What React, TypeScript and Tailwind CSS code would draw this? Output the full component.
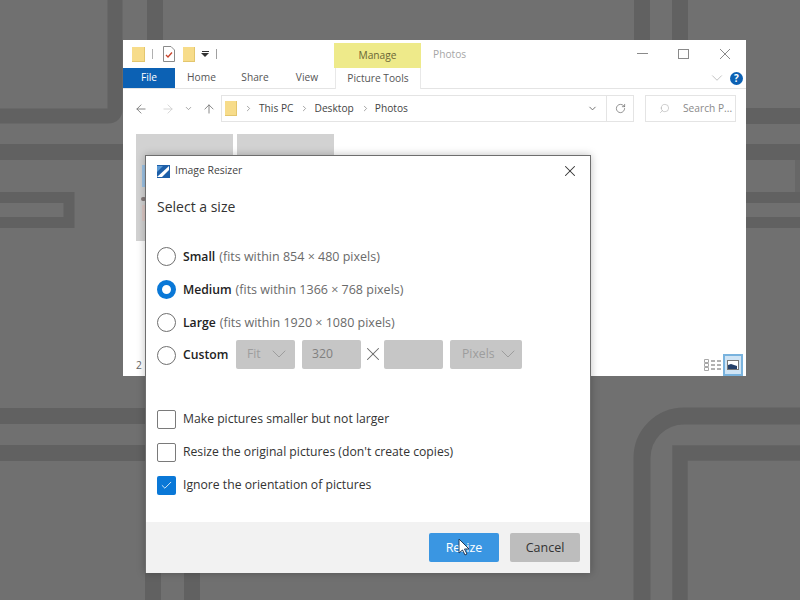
import React from 'react';
import { ArrowLeft, ArrowRight, ArrowUp, ChevronDown, ChevronRight, X, RotateCw, Search, Check } from 'lucide-react';

const FONT = 'font-["Open_Sans","Noto_Sans",sans-serif]';

const Wallpaper = () => (
  <svg className="absolute inset-0" width="800" height="600" viewBox="0 0 800 600" fill="none" stroke="#616161">
    <path d="M0 116H108Q115 116 115 109V0" strokeWidth="15" />
    <path d="M155 0V40" strokeWidth="16" />
    <path d="M0 152H123" strokeWidth="16" />
    <path d="M0 197.500H69V222.500H0" strokeWidth="11" />
    <path d="M642 0V40M680 0V40" strokeWidth="16" />
    <path d="M746 116H800M746 152H800" strokeWidth="16" />
    <path d="M746 197.500H800M746 222.500H800" strokeWidth="11" />
    <path d="M797.500 160V192" strokeWidth="5" stroke="#676767" />
    <path d="M0 416H146M0 453H146" strokeWidth="16" />
    <path d="M153 573V600M192 573V600" strokeWidth="16" />
    <path d="M800 416H684A42 42 0 0 0 642 458V600" strokeWidth="17" />
    <path d="M800 453H680V600" strokeWidth="15.500" />
  </svg>
);

const FolderIcon = ({ className }: { className: string }) => (
  <span className={`block bg-[#f7dc8a] border-b border-r border-[#e3c66e] ${className}`} />
);

const ExplorerWindow = () => (
  <div className={`absolute left-[123px] top-[40px] w-[623px] h-[336px] bg-white flex flex-col ${FONT}`}>
    {/* title row */}
    <div className="h-[28px] flex items-center relative">
      <FolderIcon className="ml-[9px] w-[13px] h-[15px]" />
      <span className="ml-[7px] w-px h-[10px] bg-[#b0b0b0]" />
      <svg className="ml-[10px]" width="12" height="16" viewBox="0 0 12 16" fill="none">
        <path d="M0.500 0.500H8L11.500 4V15.500H0.500Z" fill="#fff" stroke="#8a8a8a" />
        <path d="M3 9L5 11L9 6.500" stroke="#c8442c" strokeWidth="1.300" />
      </svg>
      <FolderIcon className="ml-[8px] w-[12px] h-[15px]" />
      <span className="ml-[6px] flex flex-col items-center gap-[1px]">
        <span className="w-[7px] h-px bg-[#333]" />
        <span className="w-0 h-0 border-x-[4px] border-x-transparent border-t-[4px] border-t-[#333]" />
      </span>
      <span className="ml-[7px] w-px h-[10px] bg-[#a0a0a0]" />
      <div className="absolute left-[211px] top-[3px] w-[87px] h-[25px] pt-[1px] bg-[#eeea8a] flex items-center justify-center text-[10.200px] text-[#6b6636]">
        Manage
      </div>
      <span className="absolute left-[310px] top-[7px] text-[10.200px] text-[#a6a6a6]">Photos</span>
      <span className="absolute left-[514px] top-[13px] w-[11px] h-px bg-[#8a8a8a]" />
      <span className="absolute left-[555px] top-[9px] w-[11px] h-[10px] border border-[#8a8a8a]" />
      <svg className="absolute left-[597px] top-[9px]" width="10" height="10" viewBox="0 0 10 10" stroke="#8a8a8a">
        <path d="M0 0L10 10M10 0L0 10" />
      </svg>
    </div>
    {/* ribbon tabs */}
    <div className="h-[21px] flex items-stretch relative border-b border-[#e4e4e4] text-[10.200px] text-[#555]">
      <div className="w-[52px] bg-[#0c61b4] text-white flex items-center justify-center">File</div>
      <div className="w-[53px] flex items-center justify-center">Home</div>
      <div className="w-[54px] flex items-center justify-center">Share</div>
      <div className="w-[50px] flex items-center justify-center">View</div>
      <div className="ml-[3px] w-[86px] -mb-px bg-white border-x border-[#e8e8e8] flex items-center justify-center">Picture Tools</div>
      <ChevronDown size={18} strokeWidth={0.800} className="absolute left-[585px] top-[1px] text-[#9a9a9a]" />
      <span className="absolute left-[607px] top-[4px] w-[13px] h-[13px] rounded-full bg-[#0c61b4] text-white text-[10px] font-bold leading-[13px] text-center">?</span>
    </div>
    {/* address bar */}
    <div className="h-[39px] flex items-center">
      <ArrowLeft size={14} strokeWidth={1.500} className="ml-[11px] text-[#777]" />
      <ArrowRight size={14} strokeWidth={1.500} className="ml-[13px] text-[#d0d0d0]" />
      <ChevronDown size={9} strokeWidth={2} className="ml-[9px] text-[#888]" />
      <ArrowUp size={14} strokeWidth={1.500} className="ml-[9px] text-[#777]" />
      <div className="ml-[5px] w-[413px] h-[27px] border border-[#e4e4e4] flex items-center text-[10.200px] text-[#444]">
        <FolderIcon className="ml-[3px] w-[12px] h-[15px]" />
        <ChevronRight size={9} strokeWidth={2} className="ml-[7px] text-[#888]" />
        <span className="ml-[6px]">This PC</span>
        <ChevronRight size={9} strokeWidth={2} className="ml-[7px] text-[#888]" />
        <span className="ml-[5px]">Desktop</span>
        <ChevronRight size={9} strokeWidth={2} className="ml-[7px] text-[#888]" />
        <span className="ml-[5px]">Photos</span>
        <ChevronDown size={11} strokeWidth={2} className="ml-auto mr-[8px] text-[#666]" />
        <div className="w-[27px] h-full border-l border-[#e4e4e4] flex items-center justify-center">
          <RotateCw size={11} strokeWidth={1.500} className="text-[#666]" />
        </div>
      </div>
      <div className="ml-[11px] w-[91px] h-[27px] border border-[#e4e4e4] flex items-center text-[10.200px] text-[#8a8a8a]">
        <Search size={11} strokeWidth={1} className="ml-[13px] -scale-x-100 text-[#999]" />
        <span className="ml-[13px]">Search P...</span>
      </div>
    </div>
    {/* thumbnails */}
    <div className="flex gap-[4px] ml-[13px] mt-[6px]">
      <div className="w-[97px] h-[107px] bg-[#d2d2d2] relative">
        <span className="absolute left-[6px] top-[31px] w-[8px] h-[22px] bg-[#9cc3e6]" />
        <span className="absolute left-[5px] top-[63px] w-[5px] h-[4px] rounded-full bg-[#857a7a]" />
        <span className="absolute left-[6px] top-[71px] w-[8px] h-[16px] bg-[#dcc9c5]" />
      </div>
      <div className="w-[97px] h-[21px] bg-[#d2d2d2]" />
    </div>
    {/* status bar */}
    <div className="absolute left-[13px] top-[318px] text-[10.200px] text-[#666]">2</div>
    <div className="absolute right-[3px] bottom-0 flex items-center gap-[2px]">
      <svg width="18" height="14" viewBox="0 0 18 14" fill="none" stroke="#a8a8a8">
        <path d="M1.500 1.500h4v3h-4zM1.500 5.500h4v3h-4zM1.500 9.500h4v3h-4z" />
        <path d="M8 3h4M14 3h4M8 7h4M14 7h4M8 11h4M14 11h4" stroke="#666" />
      </svg>
      <span className="w-[20px] h-[22px] bg-[#cfe4f5] border-2 border-[#79b3de] flex items-center justify-center">
        <svg width="12" height="10" viewBox="0 0 12 10">
          <rect x="0.500" y="0.500" width="11" height="9" fill="#fff" stroke="#777" />
          <path d="M1 5l3-1 6 2v3H1z" fill="#24406a" />
        </svg>
      </span>
    </div>
  </div>
);

const Radio = ({ checked }: { checked?: boolean }) =>
  checked ? (
    <span className="w-[19px] h-[19px] rounded-full border-[5px] border-[#0a78d7] bg-white" />
  ) : (
    <span className="w-[19px] h-[19px] rounded-full border border-[#6f6f6f] bg-white" />
  );

const SizeRow = ({ name, detail, checked }: { name: string; detail: string; checked?: boolean }) => (
  <div className="h-[33px] flex items-center">
    <Radio checked={checked} />
    <span className="ml-[7px] pt-[2px] text-[12.200px] font-semibold text-[#222]">{name}</span>
    <span className="ml-[4px] pt-[2px] text-[12.500px] text-[#6a6a6a]">{detail}</span>
  </div>
);

const Option = ({ label, checked }: { label: string; checked?: boolean }) => (
  <div className="h-[33px] flex items-center text-[12.200px] text-[#333]">
    {checked ? (
      <span className="w-[19px] h-[19px] rounded-[2px] bg-[#0a78d7] flex items-center justify-center">
        <Check size={13} strokeWidth={1.500} className="text-white" />
      </span>
    ) : (
      <span className="w-[19px] h-[19px] rounded-[2px] border border-[#7a7a7a] bg-white" />
    )}
    <span className="ml-[7px]">{label}</span>
  </div>
);

const DisabledBox = ({ className, children }: { className: string; children?: React.ReactNode }) => (
  <div className={`h-[29px] rounded-[2px] bg-[#c6c6c6] flex items-center text-[12.200px] text-[#9d9d9d] ${className}`}>{children}</div>
);

const ResizerDialog = () => (
  <div className={`absolute left-[145px] top-[155px] w-[446px] h-[418px] bg-white border-t border-x border-[#6e6e6e] shadow-[0_0_8px_rgba(0,0,0,0.25)] flex flex-col ${FONT}`}>
    <div className="h-[30px] flex items-center">
      <svg className="ml-[11px]" width="13" height="13" viewBox="0 0 13 13">
        <rect width="13" height="13" fill="#1d5fa8" />
        <path d="M0 12L12 1V5L5 12Z" fill="#fff" />
        <path d="M0 7L6 1H0Z" fill="#5b9ad6" />
      </svg>
      <span className="ml-[5px] text-[10.400px] text-[#444]">Image Resizer</span>
      <X size={18} strokeWidth={1.400} className="ml-auto mr-[11px] text-[#333]" />
    </div>
    <div className="mt-[11px] ml-[11px] text-[14px] leading-[20px] text-[#333]">Select a size</div>
    <div className="mt-[23px] ml-[11px]">
      <SizeRow name="Small" detail="(fits within 854 × 480 pixels)" />
      <SizeRow name="Medium" detail="(fits within 1366 × 768 pixels)" checked />
      <SizeRow name="Large" detail="(fits within 1920 × 1080 pixels)" />
      <div className="h-[32px] flex items-center">
        <Radio />
        <span className="ml-[7px] w-[45px] text-[12.200px] font-semibold text-[#222]">Custom</span>
        <div className="ml-[8px] mb-[2px] flex items-center">
          <DisabledBox className="w-[59px] pl-[11px] pr-[4px] justify-between">
            Fit
            <ChevronDown size={24} strokeWidth={1} />
          </DisabledBox>
          <DisabledBox className="ml-[7px] w-[59px] pl-[10px] text-[#808080]">320</DisabledBox>
          <X size={22} strokeWidth={1.100} className="mx-[0.500px] text-[#666]" />
          <DisabledBox className="w-[59px]" />
          <DisabledBox className="ml-[7px] w-[72px] pl-[12px] pr-[2px] justify-between">
            Pixels
            <ChevronDown size={24} strokeWidth={1} />
          </DisabledBox>
        </div>
      </div>
    </div>
    <div className="mt-[32px] ml-[11px]">
      <Option label="Make pictures smaller but not larger" />
      <Option label="Resize the original pictures (don't create copies)" />
      <Option label="Ignore the orientation of pictures" checked />
    </div>
    <div className="mt-auto h-[51px] bg-[#f2f2f2] flex items-center justify-end gap-[11px] pr-[10px] relative text-[12.500px]">
      <button className="w-[70px] h-[29px] pt-[2px] rounded-[2px] bg-[#3a96e2] text-white">Resize</button>
      <button className="w-[70px] h-[29px] pt-[2px] rounded-[2px] bg-[#bdbdbd] text-[#333]">Cancel</button>
      <svg className="absolute left-[312px] top-[16px]" width="13" height="18" viewBox="0 0 13 18">
        <path d="M1 1V15L4.500 12L7 17L9 16L6.500 11H11Z" fill="#fff" stroke="#1f3a5a" strokeWidth="1" />
      </svg>
    </div>
  </div>
);

export default function App() {
  return (
    <div className="relative w-[800px] h-[600px] overflow-hidden bg-[#707070]">
      <Wallpaper />
      <ExplorerWindow />
      <ResizerDialog />
    </div>
  );
}
